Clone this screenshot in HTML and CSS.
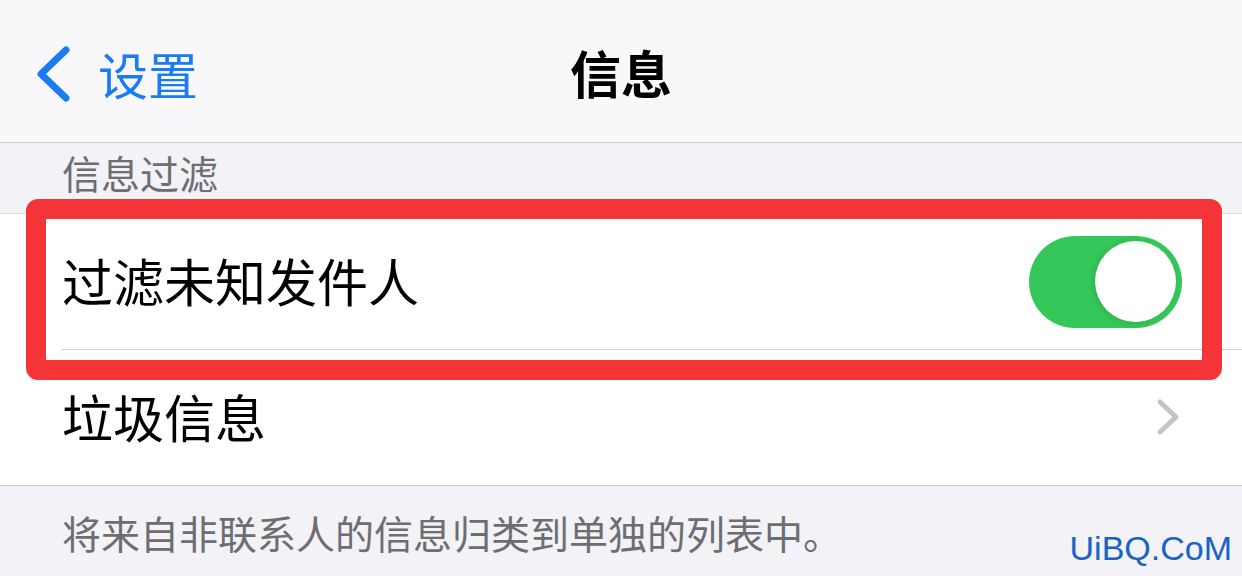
FILE: index.html
```html
<!DOCTYPE html>
<html lang="zh-CN">
<head>
  <meta charset="UTF-8" />
  <title>信息</title>
  <link rel="stylesheet" href="styles.css">
</head>
<body>
  <header class="nav">
    <a class="back" href="#">
      <svg class="back-icon" width="40" height="60" viewBox="0 0 40 60">
        <path d="M30 4 L5 28 L30 52" fill="none" stroke="#1a7cf5" stroke-width="7" stroke-linecap="round" stroke-linejoin="round"/>
      </svg>
      <span>设置</span>
    </a>
    <h1 class="title">信息</h1>
    <div></div>
  </header>

  <div class="group-header">信息过滤</div>

  <ul class="list">
    <li class="row">
      <span class="label">过滤未知发件人</span>
      <span class="toggle on"><span class="knob"></span></span>
    </li>
    <li class="row">
      <span class="label">垃圾信息</span>
      <svg class="chevron" width="24" height="40" viewBox="0 0 24 40">
        <path d="M4 4 L20 19 L4 34" fill="none" stroke="#c4c4c7" stroke-width="5" stroke-linecap="round" stroke-linejoin="round"/>
      </svg>
    </li>
  </ul>

  <p class="group-footer">将来自非联系人的信息归类到单独的列表中。</p>

  <div class="highlight"></div>
  <div class="watermark">UiBQ.CoM</div>
</body>
</html>
```

FILE: styles.css
```css
body {
  margin: 0;
  font-family: "Noto Sans CJK SC", "Noto Sans", sans-serif;
  background: #f2f2f7;
  color: #000;
  position: relative;
  height: 576px;
  overflow: hidden;
}
.nav {
  height: 142px;
  background: #f8f8fa;
  border-bottom: 1px solid #c8c8cc;
  display: grid;
  grid-template-columns: 1fr auto 1fr;
  align-items: center;
}
.back {
  display: flex;
  align-items: center;
  gap: 22px;
  padding-left: 36px;
  color: #1a7cf5;
  text-decoration: none;
  font-size: 50px;
  line-height: 1;
  margin-top: 4px;
}
.back-icon {
  display: block;
  margin-top: 6px;
}
.title {
  margin: 0;
  font-size: 51px;
  font-weight: 700;
  line-height: 1;
  margin-top: 2px;
}
.group-header {
  height: 71px;
  box-sizing: border-box;
  padding: 10px 0 0 62px;
  font-size: 39px;
  line-height: 1;
  color: #6d6d72;
  border-bottom: 1px solid #dcdce0;
}
.list {
  list-style: none;
  margin: 0;
  padding: 0 0 0 62px;
  background: #fff;
  border-bottom: 1px solid #c8c8cc;
}
.row {
  height: 135px;
  display: flex;
  align-items: center;
  justify-content: space-between;
  padding-right: 60px;
  font-size: 51px;
}
.row + .row {
  border-top: 1px solid #d2d2d6;
}
.label {
  line-height: 1;
  margin-top: -2px;
}
.toggle {
  width: 153px;
  height: 92px;
  border-radius: 46px;
  background: #34c759;
  display: flex;
  align-items: center;
  justify-content: flex-end;
  padding: 0 6px;
  box-sizing: border-box;
}
.knob {
  width: 81px;
  height: 81px;
  border-radius: 50%;
  background: #fff;
  box-shadow: -2px 1px 6px rgba(0, 0, 0, 0.12);
}
.chevron {
  display: block;
  margin-right: 2px;
}
.group-footer {
  margin: 0;
  padding: 27px 0 0 62px;
  font-size: 39px;
  line-height: 1;
  color: #6d6d72;
}
.highlight {
  position: absolute;
  left: 26px;
  top: 199px;
  width: 1196px;
  height: 181px;
  box-sizing: border-box;
  border: 20px solid #f43437;
  border-radius: 12px;
}
.watermark {
  position: absolute;
  right: 10px;
  bottom: 8px;
  font-family: "Liberation Sans", sans-serif;
  font-size: 34px;
  color: #1863c4;
}
```
